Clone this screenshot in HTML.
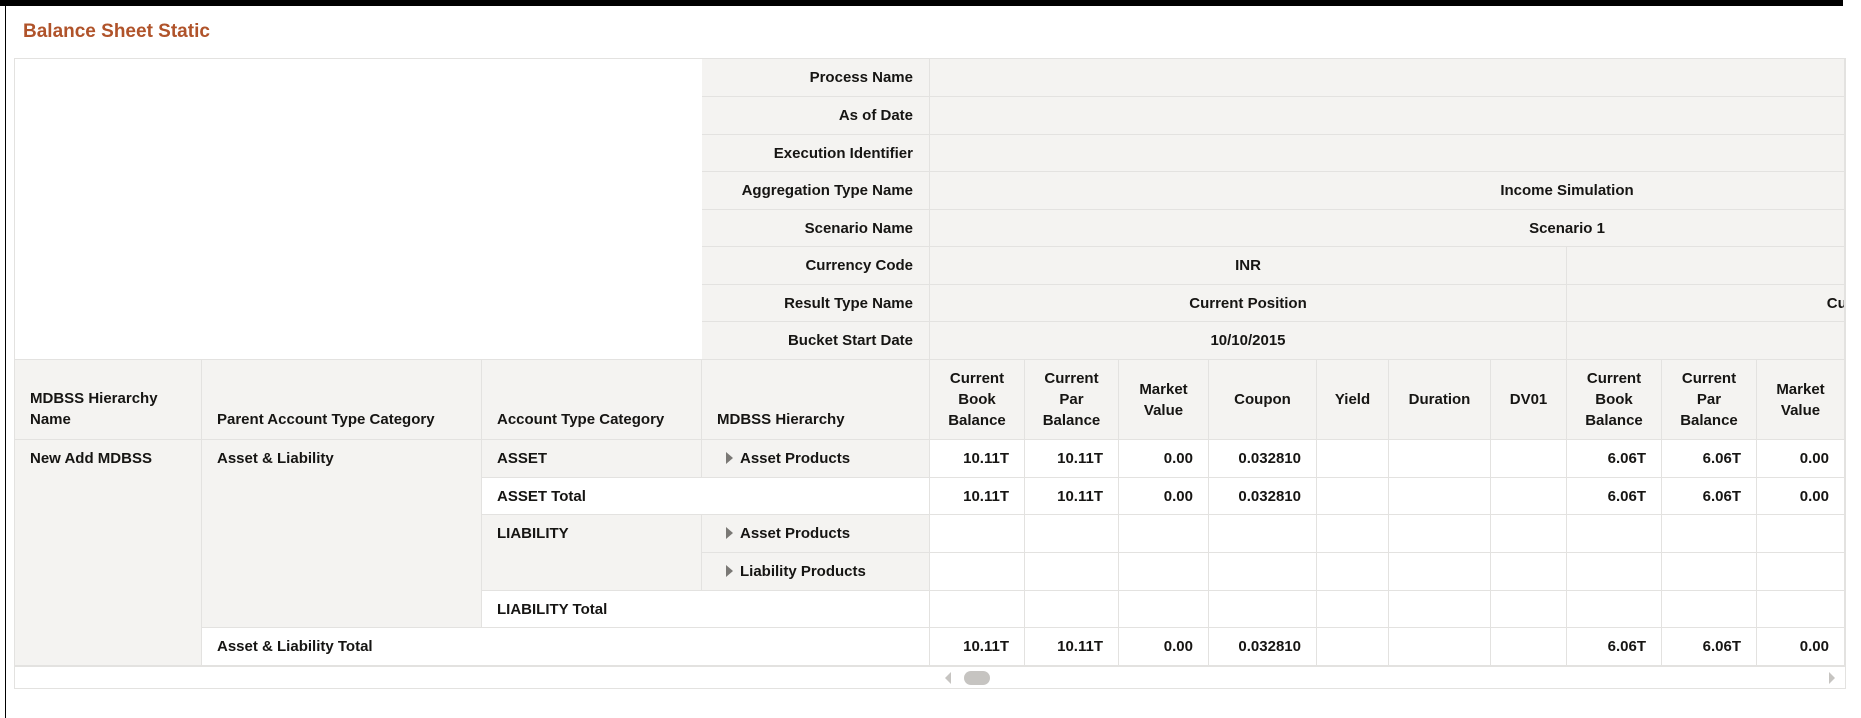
<!DOCTYPE html>
<html><head><meta charset="utf-8"><style>
body{margin:0;width:1861px;height:718px;background:#fff;position:relative;overflow:hidden;font-family:"Liberation Sans",sans-serif;font-weight:bold;font-size:15px;color:#161513}
.c{position:absolute;box-sizing:border-box;border-right:1px solid #e3e2e0;border-bottom:1px solid #e3e2e0;overflow:hidden;white-space:nowrap}
.g{background:#f4f3f1}
.w{background:#fff}
.r{text-align:right;padding-right:16px}
.t{padding:9px 0 0 15px;line-height:20px}
.n{text-align:right;padding:9px 15px 0 0;line-height:20px}
.h{display:flex;align-items:center;justify-content:center;text-align:center;line-height:21px;white-space:normal}
.hb{display:flex;align-items:flex-end;padding:0 0 9px 15px;line-height:21px;white-space:normal}
.tri{display:inline-block;width:0;height:0;border-top:6px solid transparent;border-bottom:6px solid transparent;border-left:7px solid #7a7875;margin-right:7px;vertical-align:-1px}
</style></head><body>
<div style="position:absolute;left:0;top:0;width:1843px;height:6px;background:#000"></div>
<div style="position:absolute;left:5px;top:0;width:1px;height:718px;background:#000"></div>
<div style="position:absolute;left:23px;top:21px;font-size:19px;color:#b0532a">Balance Sheet Static</div>

<div style="position:absolute;left:14px;top:58px;width:1832px;height:631px;border:1px solid #e3e2e0;box-sizing:border-box"></div>

<!-- header labels -->
<div class="c g r" style="left:702px;top:59px;width:228px;height:38px;line-height:38px">Process Name</div>
<div class="c g r" style="left:702px;top:97px;width:228px;height:38px;line-height:38px">As of Date</div>
<div class="c g r" style="left:702px;top:135px;width:228px;height:37px;line-height:37px">Execution Identifier</div>
<div class="c g r" style="left:702px;top:172px;width:228px;height:38px;line-height:38px">Aggregation Type Name</div>
<div class="c g r" style="left:702px;top:210px;width:228px;height:37px;line-height:37px">Scenario Name</div>
<div class="c g r" style="left:702px;top:247px;width:228px;height:38px;line-height:38px">Currency Code</div>
<div class="c g r" style="left:702px;top:285px;width:228px;height:37px;line-height:37px">Result Type Name</div>
<div class="c g r" style="left:702px;top:322px;width:228px;height:38px;line-height:38px">Bucket Start Date</div>

<div class="c g" style="left:930px;top:59px;width:915px;height:38px"></div>
<div class="c g" style="left:930px;top:97px;width:915px;height:38px"></div>
<div class="c g" style="left:930px;top:135px;width:915px;height:37px"></div>
<div class="c g" style="left:930px;top:172px;width:915px;height:38px;line-height:38px"><div style="width:1274px;text-align:center">Income Simulation</div></div>
<div class="c g" style="left:930px;top:210px;width:915px;height:37px;line-height:37px"><div style="width:1274px;text-align:center">Scenario 1</div></div>
<div class="c g" style="left:930px;top:247px;width:637px;height:38px;line-height:38px;text-align:center">INR</div>
<div class="c g" style="left:1567px;top:247px;width:278px;height:38px"></div>
<div class="c g" style="left:930px;top:285px;width:637px;height:37px;line-height:37px;text-align:center">Current Position</div>
<div class="c g" style="left:1567px;top:285px;width:278px;height:37px;line-height:37px"><div style="width:637px;text-align:center">Current Position</div></div>
<div class="c g" style="left:930px;top:322px;width:637px;height:38px;line-height:38px;text-align:center">10/10/2015</div>
<div class="c g" style="left:1567px;top:322px;width:278px;height:38px;line-height:38px"><div style="width:637px;text-align:center">10/10/2015</div></div>
<div style="position:absolute;left:15px;top:359px;width:687px;height:1px;background:#e3e2e0"></div>

<!-- column headers -->
<div class="c g hb" style="left:15px;top:360px;width:187px;height:80px">MDBSS Hierarchy Name</div>
<div class="c g hb" style="left:202px;top:360px;width:280px;height:80px">Parent Account Type Category</div>
<div class="c g hb" style="left:482px;top:360px;width:220px;height:80px">Account Type Category</div>
<div class="c g hb" style="left:702px;top:360px;width:228px;height:80px">MDBSS Hierarchy</div>
<div class="c g h" style="left:930px;top:360px;width:95px;height:80px">Current<br>Book<br>Balance</div>
<div class="c g h" style="left:1025px;top:360px;width:94px;height:80px">Current<br>Par<br>Balance</div>
<div class="c g h" style="left:1119px;top:360px;width:90px;height:80px">Market<br>Value</div>
<div class="c g h" style="left:1209px;top:360px;width:108px;height:80px">Coupon</div>
<div class="c g h" style="left:1317px;top:360px;width:72px;height:80px">Yield</div>
<div class="c g h" style="left:1389px;top:360px;width:102px;height:80px">Duration</div>
<div class="c g h" style="left:1491px;top:360px;width:76px;height:80px">DV01</div>
<div class="c g h" style="left:1567px;top:360px;width:95px;height:80px">Current<br>Book<br>Balance</div>
<div class="c g h" style="left:1662px;top:360px;width:95px;height:80px">Current<br>Par<br>Balance</div>
<div class="c g h" style="left:1757px;top:360px;width:88px;height:80px">Market<br>Value</div>

<!-- row dims -->
<div class="c g t" style="left:15px;top:440px;width:187px;height:226px">New Add MDBSS</div>
<div class="c g t" style="left:202px;top:440px;width:280px;height:188px">Asset &amp; Liability</div>
<div class="c g t" style="left:482px;top:440px;width:220px;height:38px">ASSET</div>
<div class="c g t" style="left:702px;top:440px;width:228px;height:38px;padding-left:24px"><span class="tri"></span>Asset Products</div>
<div class="c w t" style="left:482px;top:478px;width:448px;height:37px">ASSET Total</div>
<div class="c g t" style="left:482px;top:515px;width:220px;height:76px">LIABILITY</div>
<div class="c g t" style="left:702px;top:515px;width:228px;height:38px;padding-left:24px"><span class="tri"></span>Asset Products</div>
<div class="c g t" style="left:702px;top:553px;width:228px;height:38px;padding-left:24px"><span class="tri"></span>Liability Products</div>
<div class="c w t" style="left:482px;top:591px;width:448px;height:37px">LIABILITY Total</div>
<div class="c w t" style="left:202px;top:628px;width:728px;height:38px">Asset &amp; Liability Total</div>

<!-- numeric grid -->
<div id="grid"></div>
<script>
var cols=[930,1025,1119,1209,1317,1389,1491,1567,1662,1757,1845];
var rows=[440,478,515,553,591,628,666];
var vals=[
["10.11T","10.11T","0.00","0.032810","","","","6.06T","6.06T","0.00"],
["10.11T","10.11T","0.00","0.032810","","","","6.06T","6.06T","0.00"],
["","","","","","","","","",""],
["","","","","","","","","",""],
["","","","","","","","","",""],
["10.11T","10.11T","0.00","0.032810","","","","6.06T","6.06T","0.00"]];
var h="";
for(var r=0;r<6;r++)for(var c=0;c<10;c++){
h+='<div class="c w n" style="left:'+cols[c]+'px;top:'+rows[r]+'px;width:'+(cols[c+1]-cols[c])+'px;height:'+(rows[r+1]-rows[r])+'px">'+vals[r][c]+'</div>';}
document.getElementById("grid").innerHTML=h;
</script>

<!-- scrollbar -->
<div style="position:absolute;left:15px;top:666px;width:1830px;height:1px;background:#e3e2e0"></div>
<div style="position:absolute;left:945px;top:672px;width:0;height:0;border-top:6px solid transparent;border-bottom:6px solid transparent;border-right:6px solid #c6c4c1"></div>
<div style="position:absolute;left:964px;top:671px;width:26px;height:14px;border-radius:7px;background:#c6c4c1"></div>
<div style="position:absolute;left:1829px;top:672px;width:0;height:0;border-top:6px solid transparent;border-bottom:6px solid transparent;border-left:6px solid #c6c4c1"></div>
</body></html>
